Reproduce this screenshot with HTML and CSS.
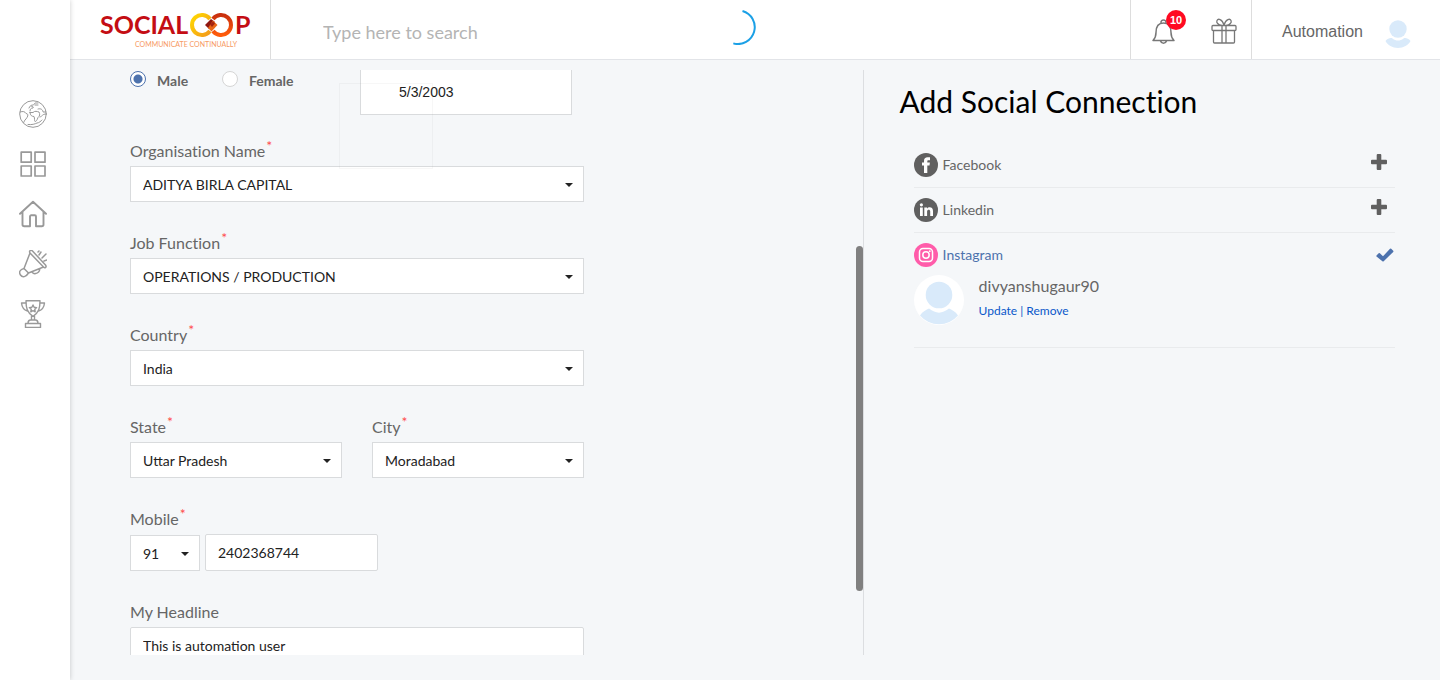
FILE: index.html
```html
<!DOCTYPE html>
<html lang="en">
<head>
<meta charset="utf-8">
<meta name="viewport" content="width=device-width, initial-scale=1">
<title>Socialoop - Profile</title>
<link rel="stylesheet" href="styles.css">
</head>
<body>
<div class="app">
  <nav class="sidebar" aria-label="Main">
    <a href="#" class="nav-link" aria-label="World"><svg class="icon" viewBox="0 0 28 28"><circle cx="14" cy="14" r="13.3"/><path d="M1 12c3-1 5-.5 6 1.500 2 0 2.500 2 1 4-1 1-1 2-2 2.500-1 1-1 3-1.500 3M11 11c0-2 1-3 3-3 1-2-1-1-2-2M10 8c1-2 2-3 4-3 1 0 1-1 2-2h3M16 5h3M11 12.500h3c2-2 4-1 6-.5 1 2 1 4-1 5.500-1 3-2 4-3 4-1-1 0-3-1-5-2 0-4-1-4-4zM19 9c3-1 5 1 5 3h3M21 17c3-1 2-3 6-3M23 20c-1 1-3 3-5 3-2 1-5 2-9 1.500"/></svg></a>
    <a href="#" class="nav-link" aria-label="Apps"><svg class="icon" viewBox="0 0 28 28"><path stroke-width="1.700" d="M2.200 2.200h10v10h-10zM16 2.200h10v10H16zM2.200 16h10v10h-10zM16 16h10v10H16z"/></svg></a>
    <a href="#" class="nav-link" aria-label="Home"><svg class="icon" viewBox="0 0 28 28"><path stroke-width="1.900" d="M1 13.800 14 1.700l13 12.100M3.500 12v12.500c0 1 .8 1.700 1.700 1.700H11V16.500c0-.8.5-1.200 1.200-1.200h3.600c.7 0 1.200.4 1.200 1.200v9.700h5.800c1 0 1.700-.7 1.700-1.700V12"/></svg></a>
    <a href="#" class="nav-link" aria-label="Announcements"><svg class="icon" viewBox="0 0 28 28"><path stroke-width="1.500" d="M11 3c-1.500-2 1-3.500 2.500-2l13 14c1.500 2-.5 3.500-2 2zM11 3 5 18.500l4.500 4.500 15-6M5 18.500c-4 1-5.500 3.500-3.500 6.500 2 3 5.500 2 8-2M13 21.500c0 3 7 3.500 8-3M20 5l2-3M23 8l4-4M25 11l3-1M19 2l1-1"/></svg></a>
    <a href="#" class="nav-link" aria-label="Rewards"><svg class="icon" viewBox="0 0 28 28"><path stroke-width="1.400" d="M7 .8h14c0 7-1 12-7 15.500C8 12.800 7 7.800 7 .8zM7 3H2.500C3 8 5 10 8.500 11M21 3h4.500C25 8 23 10 19.500 11M12.500 16v4M15.500 16v4M9 23.500c0-2.500 1-3.500 2.500-3.500h5c1.500 0 2.500 1 2.500 3.500M6.500 23.500h15v4h-15zM14 5l1.100 2.300 2.500.3-1.800 1.700.4 2.500L14 10.600l-2.200 1.200.4-2.500-1.800-1.700 2.500-.3z"/></svg></a>
  </nav>

  <div class="page">
    <header class="topbar">
      <a href="#" class="logo" aria-label="Socialoop">
        <svg width="156" height="48" viewBox="0 -8 156 48">
          <defs>
            <linearGradient id="sun" x1="0" y1="0" x2="1" y2="1"><stop offset="0" stop-color="#ffd900"/><stop offset="1" stop-color="#f39a1c"/></linearGradient>
            <linearGradient id="fire" x1="0" y1="0" x2="0" y2="1"><stop offset="0" stop-color="#c9300f"/><stop offset="1" stop-color="#ff5c0a"/></linearGradient>
          </defs>
          <text class="logo-word" x="0" y="23">SOCIAL</text>
          <text class="logo-word" x="135" y="23">P</text>
          <path d="M110 8a10 10 0 1 0 0 12" fill="none" stroke="url(#sun)" stroke-width="4"/>
          <path d="M113 8a10 10 0 1 1 0 12" fill="none" stroke="url(#fire)" stroke-width="4"/>
          <path d="m105 14 6-6 4 3-6 7z" fill="#8f1710"/>
          <path d="m113 9.500 4.500 4.500-6 6.500-3.500-3.500z" fill="#e86718"/>
          <path d="m110 13.500 3-3 2 2-3 3.500z" fill="#a52412"/>
          <text class="logo-tag" x="35" y="36">COMMUNICATE CONTINUALLY</text>
        </svg>
      </a>
      <input class="search" type="search" placeholder="Type here to search" aria-label="Search">
      <div class="alerts">
        <button class="icon-button" type="button" aria-label="Notifications">
          <svg class="icon icon-dark" viewBox="0 0 28 28"><path stroke-width="1.500" d="M3 23.500c2-2 3-3.500 3-8C6 9.500 8 6 13.500 6S21 9.500 21 15.500c0 4.500 1 6 3 8zM11 6c-.7-4 5.700-4 5 0M10.500 24c1 3 5 3 6 0"/></svg>
          <span class="badge">10</span>
        </button>
        <button class="icon-button" type="button" aria-label="Gifts">
          <svg class="icon icon-dark" viewBox="0 0 28 28"><path stroke-width="1.300" d="M3 8.500h22c.5 0 1 .4 1 1v3c0 .6-.5 1-1 1H3c-.6 0-1-.4-1-1v-3c0-.6.400-1 1-1zM3.500 13.500V25c0 .6.400 1 1 1h19c.6 0 1-.4 1-1V13.500M12 8.500V26M16 8.500V26M12 8.500C8 8 6 5.500 7 3.500S12 1.500 14 8M16 8.500c4-.5 6-3 5-5S16 1.500 14 8"/></svg>
        </button>
      </div>
      <button class="account" type="button">
        <span>Automation</span>
        <svg class="avatar-small" viewBox="0 0 26 28"><circle cx="13" cy="9" r="8.700"/><path d="M.5 21C3 18 6 17.500 7.500 18.500c3.500 2.700 7.500 2.700 11 0 1.500-1 4.500-.5 7 2.500-2 4-7 7-12.500 7S2.500 25 .5 21z"/></svg>
      </button>
      <svg class="spinner" viewBox="0 0 36 36"><path d="M22.500 2A16.600 16.600 0 0 1 13.300 34.400"/></svg>
    </header>

    <main class="content">
      <section class="form-pane">
        <form class="form">
          <div class="birth-row">
            <label class="radio"><input type="radio" name="gender" checked><span>Male</span></label>
            <label class="radio"><input type="radio" name="gender"><span>Female</span></label>
            <input class="control date" type="text" value="5/3/2003" aria-label="Date of birth">
          </div>
          <div class="field">
            <label for="org">Organisation Name<sup>*</sup></label>
            <div class="select"><select class="control" id="org"><option>ADITYA BIRLA CAPITAL</option></select></div>
          </div>
          <div class="field">
            <label for="job">Job Function<sup>*</sup></label>
            <div class="select"><select class="control" id="job"><option>OPERATIONS / PRODUCTION</option></select></div>
          </div>
          <div class="field">
            <label for="country">Country<sup>*</sup></label>
            <div class="select"><select class="control" id="country"><option>India</option></select></div>
          </div>
          <div class="pair">
            <div class="field">
              <label for="state">State<sup>*</sup></label>
              <div class="select"><select class="control" id="state"><option>Uttar Pradesh</option></select></div>
            </div>
            <div class="field">
              <label for="city">City<sup>*</sup></label>
              <div class="select"><select class="control" id="city"><option>Moradabad</option></select></div>
            </div>
          </div>
          <div class="field">
            <label for="mobile">Mobile<sup>*</sup></label>
            <div class="phone">
              <div class="select code"><select class="control" aria-label="Country code"><option>91</option></select></div>
              <input class="control text number" id="mobile" type="tel" value="2402368744">
            </div>
          </div>
          <div class="field">
            <label for="headline">My Headline</label>
            <input class="control text" id="headline" type="text" value="This is automation user">
          </div>
        </form>
        <div class="ghost"></div>
        <div class="thumb"></div>
      </section>

      <aside class="social">
        <h1>Add Social Connection</h1>
        <ul class="networks">
          <li class="network">
            <div class="network-head">
              <svg class="brand" viewBox="0 0 24 24"><circle cx="12" cy="12" r="12"/><path class="mark" d="M10 20v-7.500H8V9.500h2V8c0-2.600 1.300-3.800 3.600-3.800H16v3h-1.500c-.9 0-1.200.4-1.200 1.200v1.100h2.600l-.4 3h-2.200V20z"/></svg>
              <span class="network-name">Facebook</span>
              <button class="add" type="button" aria-label="Add Facebook"><svg viewBox="0 0 16 16"><path d="M6.700 0h2.600q1 0 1 1v4.700H15q1 0 1 1v2.600q0 1-1 1h-4.700V15q0 1-1 1H6.700q-1 0-1-1v-4.700H1q-1 0-1-1V6.700q0-1 1-1h4.700V1q0-1 1-1z"/></svg></button>
            </div>
          </li>
          <li class="network">
            <div class="network-head">
              <svg class="brand" viewBox="0 0 24 24"><circle cx="12" cy="12" r="12"/><path class="mark" d="M6 9.500h2.800V18H6zM10.300 9.500H13v1.200c1.300-2 6-2.200 6 2.300v5h-2.800v-4.500c0-2.300-3.100-2.200-3.100 0V18h-2.800z"/><circle class="mark" cx="7.400" cy="6.800" r="1.600"/></svg>
              <span class="network-name">Linkedin</span>
              <button class="add" type="button" aria-label="Add Linkedin"><svg viewBox="0 0 16 16"><path d="M6.700 0h2.600q1 0 1 1v4.700H15q1 0 1 1v2.600q0 1-1 1h-4.700V15q0 1-1 1H6.700q-1 0-1-1v-4.700H1q-1 0-1-1V6.700q0-1 1-1h4.700V1q0-1 1-1z"/></svg></button>
            </div>
          </li>
          <li class="network connected">
            <div class="network-head">
              <svg class="brand" viewBox="0 0 24 24"><circle cx="12" cy="12" r="12"/><g fill="none" stroke="#fff" stroke-width="1.500"><rect x="5.500" y="5.500" width="13" height="13" rx="3.500"/><circle cx="12" cy="12" r="3.200"/></g><circle class="mark" cx="15.800" cy="8.200" r=".9"/></svg>
              <span class="network-name">Instagram</span>
              <svg class="check" viewBox="0 0 18 14"><path d="M.5 7.500 2.700 5.300q.6-.5 1.200 0L7 8.300l7-7.500q.6-.6 1.200 0l2 1.900q.6.600 0 1.200L7.700 13.300q-.7.600-1.300 0L.5 8.500q-.5-.5 0-1z"/></svg>
            </div>
            <div class="profile">
              <svg class="avatar" viewBox="0 0 50 50"><circle cx="25" cy="25" r="25" fill="#fff"/><g fill="#d9eafa"><circle cx="25" cy="20" r="13.300"/><path d="M6 40.500c2.500-4 6.500-6 9-7 7 5.500 13 5.500 20 0 2.500 1 6.500 3 9 7A25 25 0 0 1 6 40.500z"/></g></svg>
              <div class="profile-text">
                <span class="handle">divyanshugaur90</span>
                <span class="actions"><a href="#">Update</a> | <a href="#">Remove</a></span>
              </div>
            </div>
          </li>
        </ul>
      </aside>
    </main>
  </div>
</div>
</body>
</html>
```
FILE: styles.css
```css
* {
  box-sizing: border-box;
}

body {
  margin: 0;
  background: #f5f7f9;
  color: #666;
  font-family: Lato, "Open Sans", sans-serif;
  font-size: 14px;
}

a {
  color: #0a58ca;
  text-decoration: none;
}

button {
  padding: 0;
  border: 0;
  background: none;
  color: inherit;
  cursor: pointer;
}

.app {
  display: flex;
  height: 100vh;
}

/* Sidebar */
.sidebar {
  z-index: 1;
  display: flex;
  flex: 0 0 70px;
  flex-direction: column;
  align-items: center;
  gap: 22px;
  padding: 100px 4px 0 0;
  background: #fff;
  box-shadow: 0 0 5px rgba(0, 0, 0, 0.2);
}

.nav-link {
  display: block;
  height: 28px;
}

.icon {
  display: block;
  width: 28px;
  height: 28px;
  fill: none;
  stroke: #999;
  stroke-linecap: round;
  stroke-linejoin: round;
}

.icon-dark {
  stroke: #777;
}

.page {
  display: flex;
  flex: 1;
  flex-direction: column;
  min-width: 0;
}

/* Top bar */
.topbar {
  position: relative;
  display: flex;
  flex: 0 0 60px;
  background: #fff;
  border-bottom: 1px solid #e2e4e8;
}

.logo {
  flex: 0 0 201px;
  padding: 3px 0 0 30px;
  border-right: 1px solid #ddd;
}

.logo svg {
  display: block;
}

.logo-word {
  fill: #c40d14;
  font-size: 25px;
  font-weight: 700;
}

.logo-tag {
  fill: #f79a63;
  font-size: 7px;
}

.search {
  flex: 1;
  min-width: 0;
  padding: 4px 52px 0;
  border: 0;
  outline: 0;
  background: none;
  color: #666;
  font-family: inherit;
  font-size: 18px;
}

.search::placeholder {
  color: #b4b4b4;
}

.alerts {
  display: flex;
  align-items: center;
  gap: 32px;
  padding: 2px 13px 0 19px;
  border: solid #ddd;
  border-width: 0 1px;
}

.icon-button {
  position: relative;
}

.badge {
  position: absolute;
  top: -7px;
  left: 16px;
  width: 20px;
  border-radius: 10px;
  background: #ff0a22;
  color: #fff;
  font: bold 11px/20px "Liberation Sans", Arial, sans-serif;
  text-align: center;
}

.account {
  display: flex;
  flex: 0 0 188px;
  align-items: center;
  justify-content: space-between;
  padding: 4px 29px 0 30px;
  color: #666;
  font: 16px/24px "Liberation Sans", Arial, sans-serif;
}

.avatar-small {
  width: 26px;
  height: 28px;
  margin-top: 4px;
  fill: #d9eafa;
}

.spinner {
  position: absolute;
  top: 9px;
  left: 650px;
  width: 36px;
  height: 36px;
  fill: none;
  stroke: #1ba0e6;
  stroke-width: 2;
}

/* Content */
.content {
  display: flex;
  flex: 1;
  min-height: 0;
  padding: 10px 0 25px;
}

.form-pane {
  position: relative;
  flex: 0 0 calc(58% - 1px);
  padding-left: 60px;
  overflow: hidden;
  border-right: 1px solid #dcdee1;
}

.form {
  display: flex;
  flex-direction: column;
  gap: 26px;
  width: 454px;
}

.birth-row {
  display: grid;
  grid-template-columns: 92px 138px 212px;
  margin-bottom: -5px;
}

.radio {
  display: flex;
  align-items: flex-start;
  align-self: start;
  gap: 11px;
  line-height: 20px;
  font-weight: 700;
}

.radio span {
  padding-top: 1px;
}

.radio input {
  width: 16px;
  height: 16px;
  margin: 1px 0 0;
  appearance: none;
  border: 1px solid #d5d5d5;
  border-radius: 50%;
  background: #fff;
}

.radio input:checked {
  border-color: #4d72ad;
  background: radial-gradient(circle, #4d72ad 4px, #fff 5px);
}

.control {
  display: block;
  width: 100%;
  height: 36px;
  margin: 0;
  padding: 0 12px;
  appearance: none;
  border: 1px solid #d9dbdd;
  border-radius: 0;
  outline: 0;
  background: #fff;
  color: #222;
  font: 14px/20px Lato, "Open Sans", sans-serif;
}

select.control {
  padding-top: 2px;
}

.date {
  height: 45px;
  padding-left: 38px;
  border-top: 0;
  font-family: "Liberation Sans", Arial, sans-serif;
}

.text {
  height: 37px;
  border-radius: 2px;
}

.field label {
  display: block;
  font-size: 16px;
  line-height: 30px;
  font-variant-ligatures: none;
}

.field sup {
  margin-left: 1px;
  color: #ff4d4d;
  font-size: 14px;
  line-height: 0;
}

.select {
  position: relative;
}

.select::after {
  content: "";
  position: absolute;
  top: 17px;
  right: 11px;
  border: 4px solid transparent;
  border-top-color: #222;
  border-bottom: 0;
  pointer-events: none;
}

.pair {
  display: grid;
  grid-template-columns: 1fr 1fr;
  gap: 30px;
}

.phone {
  display: flex;
  align-items: flex-end;
  gap: 5px;
}

.code {
  width: 70px;
}

.number {
  width: 173px;
}

.ghost {
  position: absolute;
  top: 13px;
  left: 269px;
  width: 94px;
  height: 86px;
  border: 1px solid rgba(120, 120, 120, 0.06);
  pointer-events: none;
}

.thumb {
  position: absolute;
  top: 30%;
  right: 0;
  width: 7px;
  height: 59%;
  border-radius: 4px;
  background: #808080;
}

/* Social connections */
.social {
  flex: 1;
  padding: 11px 45px 0 36px;
}

.social h1 {
  margin: 0;
  color: #000;
  font-size: 30px;
  font-weight: 400;
  line-height: 40px;
  font-variant-ligatures: none;
}

.networks {
  margin: 22px 0 0 14px;
  padding: 0;
  list-style: none;
}

.network {
  border-bottom: 1px solid #e9ebed;
}

.network-head {
  display: flex;
  align-items: center;
  gap: 5px;
  height: 44px;
}

.brand {
  width: 24px;
  height: 24px;
  fill: #606060;
}

.brand .mark {
  fill: #fff;
}

.network-name {
  flex: 1;
  padding-bottom: 2px;
}

.add {
  padding: 0 8px 6px 0;
}

.add svg {
  display: block;
  width: 16px;
  height: 16px;
  fill: #606060;
}

.check {
  width: 18px;
  height: 14px;
  margin-right: 1px;
  fill: #4d72ad;
}

.connected {
  padding-bottom: 22px;
}

.connected .network-head {
  height: 42px;
  padding-top: 2px;
}

.connected .brand {
  fill: #ff5caa;
}

.connected .network-name {
  color: #4d72ad;
}

.profile {
  display: flex;
  gap: 15px;
}

.avatar {
  width: 50px;
  height: 50px;
}

.profile-text {
  display: flex;
  flex-direction: column;
}

.handle {
  font-size: 16px;
  line-height: 22px;
}

.actions {
  color: #0a58ca;
  font-size: 12px;
  line-height: 28px;
}
```
